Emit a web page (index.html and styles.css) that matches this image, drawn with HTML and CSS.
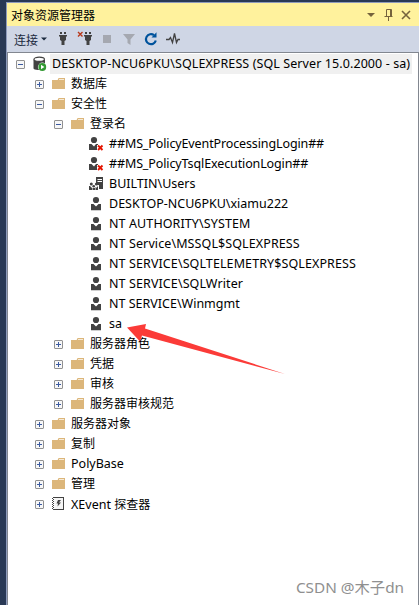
FILE: index.html
```html
<!DOCTYPE html>
<html lang="zh-CN">
<head>
  <meta charset="UTF-8">
  <meta name="viewport" content="width=device-width, initial-scale=1.0">
  <title>对象资源管理器</title>
  <link rel="stylesheet" href="styles.css">
</head>
<body>

<!-- Shared icons -->
<svg class="sprite" width="0" height="0">
  <symbol id="plus" viewBox="0 0 9 9">
    <rect x=".5" y=".5" width="8" height="8" rx=".5" fill="#f7f7f7" stroke="#919191"/>
    <path d="M2 4.5h5M4.5 2v5" stroke="#3b5aa0"/>
  </symbol>
  <symbol id="minus" viewBox="0 0 9 9">
    <rect x=".5" y=".5" width="8" height="8" rx=".5" fill="#f7f7f7" stroke="#919191"/>
    <path d="M2 4.5h5" stroke="#3b5aa0"/>
  </symbol>
  <symbol id="folder" viewBox="0 0 16 16">
    <path d="M1 4h5.6l1-2H14v11H1z" fill="#dcb67a"/>
    <path d="M8 3.5h5" stroke="#f6ead6"/>
  </symbol>
  <symbol id="user" viewBox="0 0 16 16">
    <circle cx="7" cy="4" r="3.1" fill="#424242"/>
    <path d="M2 8h2.5L7 10.5 9.5 8H12v6.3H2z" fill="#424242"/>
  </symbol>
  <symbol id="user-off" viewBox="0 0 16 16">
    <circle cx="5" cy="4" r="3.1" fill="#424242"/>
    <path d="M0 8h2.5L5 10.5 7 8h2v1H8v5H0z" fill="#424242"/>
    <path d="M9 9.5l4.5 4.5M13.5 9.5L9 14" stroke="#e51400" stroke-width="1.9"/>
  </symbol>
  <symbol id="group" viewBox="0 0 16 16">
    <path d="M7 1h7v12h-4V9H7z" fill="#424242"/>
    <path d="M8.5 3.5H13M8.5 5.5H13" stroke="#fff"/>
    <g fill="#424242">
      <circle cx="2.3" cy="8" r="1.5"/><circle cx="7.5" cy="8" r="1.6"/>
      <circle cx="4.7" cy="10.3" r="1.3"/>
      <path d="M0 10h1l1 1 1 1v2H0zM6.5 11l1 .8L9 10v4H6.5zM3.5 12H6v2H3.5z"/>
    </g>
  </symbol>
  <symbol id="server" viewBox="0 0 16 16">
    <path d="M1.5 3.5v8.8c0 1 2 1.700 4.500 1.700H9l4-5V3.500z" fill="#424242"/>
    <ellipse cx="7.2" cy="3.3" rx="5.2" ry="2.1" fill="#fff" stroke="#424242" stroke-width="1.2"/>
    <circle cx="10.3" cy="11" r="4.4" fill="#fff"/>
    <circle cx="10.3" cy="11" r="3.9" fill="#393"/>
    <path d="M9 8.8v4.4l3.4-2.2z" fill="#fff"/>
  </symbol>
  <symbol id="xevent" viewBox="0 0 16 16">
    <rect x="2.5" y="1.5" width="10" height="12" fill="#f5f5f5" stroke="#424242"/>
    <path d="M2.5 2v12" stroke="#fff" stroke-width="2" stroke-dasharray="1 1"/>
    <path d="M1.5 2v12" stroke="#424242" stroke-dasharray="1 1"/>
    <path d="M7 4h3L8 6.5h2l-3.5 4 .5-3H5.500z" fill="#424242"/>
  </symbol>
</svg>

<div class="panel">
  <div class="title-bar">
    <span class="title">对象资源管理器</span>
    <svg class="title-buttons" width="48" height="16" viewBox="0 0 48 16">
      <path d="M0 6h8l-4 4z" fill="#75633d"/>
      <path d="M19.5 9V2.5h5V9M17.5 9.5h8M21.5 10v4" fill="none" stroke="#75633d"/>
      <path d="M23.5 2v7" stroke="#75633d"/>
      <path d="M35 4l8 8M43 4l-8 8" stroke="#75633d" stroke-width="1.6"/>
    </svg>
  </div>

  <div class="toolbar">
    <span class="connect">连接</span>
    <svg width="6" height="16" viewBox="0 0 6 16"><path d="M0 6.5h6l-3 3z" fill="#1b293e"/></svg>
    <svg class="tools" width="126" height="16" viewBox="0 0 126 16">
      <!-- plug -->
      <g id="plug" fill="#424242">
        <path d="M2 1h2v2H2zM6 1h2v2H6zM1 4h8v1.5H8V9L6.500 10v4h-3v-4L2 9V5.500H1z"/>
      </g>
      <use href="#plug" x="25"/>
      <path d="M20 1l4.500 4.500M24.500 1L20 5.500" stroke="#b8391c" stroke-width="1.4"/>
      <rect x="45" y="4" width="8" height="8" fill="#a5a8b0"/>
      <path d="M65 3h12l-4.500 5.500V14l-3-2V8.500z" fill="#a5a8b0"/>
      <path d="M96 4.200A5 5 0 1 0 97.800 9.500" fill="none" stroke="#00539c" stroke-width="2.2"/>
      <path d="M93.500 6.500h5V1.300z" fill="#00539c"/>
      <path d="M108 8.500h3l1.500-2 2 5 2-9 2 9 1.500-3h2" fill="none" stroke="#424242" stroke-width="1.3"/>
    </svg>
  </div>

  <div class="tree">
    <div class="row">
      <svg class="toggle"><use href="#minus"/></svg>
      <svg class="icon"><use href="#server"/></svg>
      <span class="label selected">DESKTOP-NCU6PKU\SQLEXPRESS (SQL Server 15.0.2000 - sa)</span>
    </div>
    <div class="row level-1">
      <svg class="toggle"><use href="#plus"/></svg>
      <svg class="icon"><use href="#folder"/></svg>
      <span class="label cjk">数据库</span>
    </div>
    <div class="row level-1">
      <svg class="toggle"><use href="#minus"/></svg>
      <svg class="icon"><use href="#folder"/></svg>
      <span class="label cjk">安全性</span>
    </div>
    <div class="row level-2">
      <svg class="toggle"><use href="#minus"/></svg>
      <svg class="icon"><use href="#folder"/></svg>
      <span class="label cjk">登录名</span>
    </div>

    <!-- Logins -->
    <div class="row level-3">
      <svg class="icon"><use href="#user-off"/></svg>
      <span class="label policy">##MS_PolicyEventProcessingLogin##</span>
    </div>
    <div class="row level-3">
      <svg class="icon"><use href="#user-off"/></svg>
      <span class="label policy">##MS_PolicyTsqlExecutionLogin##</span>
    </div>
    <div class="row level-3">
      <svg class="icon"><use href="#group"/></svg>
      <span class="label">BUILTIN\Users</span>
    </div>
    <div class="row level-3">
      <svg class="icon"><use href="#user"/></svg>
      <span class="label">DESKTOP-NCU6PKU\xiamu222</span>
    </div>
    <div class="row level-3">
      <svg class="icon"><use href="#user"/></svg>
      <span class="label service">NT AUTHORITY\SYSTEM</span>
    </div>
    <div class="row level-3">
      <svg class="icon"><use href="#user"/></svg>
      <span class="label service">NT Service\MSSQL$SQLEXPRESS</span>
    </div>
    <div class="row level-3">
      <svg class="icon"><use href="#user"/></svg>
      <span class="label service">NT SERVICE\SQLTELEMETRY$SQLEXPRESS</span>
    </div>
    <div class="row level-3">
      <svg class="icon"><use href="#user"/></svg>
      <span class="label service">NT SERVICE\SQLWriter</span>
    </div>
    <div class="row level-3">
      <svg class="icon"><use href="#user"/></svg>
      <span class="label">NT SERVICE\Winmgmt</span>
    </div>
    <div class="row level-3">
      <svg class="icon"><use href="#user"/></svg>
      <span class="label">sa</span>
    </div>

    <div class="row level-2">
      <svg class="toggle"><use href="#plus"/></svg>
      <svg class="icon"><use href="#folder"/></svg>
      <span class="label cjk">服务器角色</span>
    </div>
    <div class="row level-2">
      <svg class="toggle"><use href="#plus"/></svg>
      <svg class="icon"><use href="#folder"/></svg>
      <span class="label cjk">凭据</span>
    </div>
    <div class="row level-2">
      <svg class="toggle"><use href="#plus"/></svg>
      <svg class="icon"><use href="#folder"/></svg>
      <span class="label cjk">审核</span>
    </div>
    <div class="row level-2">
      <svg class="toggle"><use href="#plus"/></svg>
      <svg class="icon"><use href="#folder"/></svg>
      <span class="label cjk">服务器审核规范</span>
    </div>
    <div class="row level-1">
      <svg class="toggle"><use href="#plus"/></svg>
      <svg class="icon"><use href="#folder"/></svg>
      <span class="label cjk">服务器对象</span>
    </div>
    <div class="row level-1">
      <svg class="toggle"><use href="#plus"/></svg>
      <svg class="icon"><use href="#folder"/></svg>
      <span class="label cjk">复制</span>
    </div>
    <div class="row level-1">
      <svg class="toggle"><use href="#plus"/></svg>
      <svg class="icon"><use href="#folder"/></svg>
      <span class="label">PolyBase</span>
    </div>
    <div class="row level-1">
      <svg class="toggle"><use href="#plus"/></svg>
      <svg class="icon"><use href="#folder"/></svg>
      <span class="label cjk">管理</span>
    </div>
    <div class="row level-1">
      <svg class="toggle"><use href="#plus"/></svg>
      <svg class="icon"><use href="#xevent"/></svg>
      <span class="label">XEvent <span class="cjk">探查器</span></span>
    </div>
  </div>
</div>

<!-- Arrow pointing at the sa login -->
<svg class="arrow" width="158" height="52" viewBox="0 0 158 52">
  <path d="M0 4.500L19 1l-1 4.500L158 51 15 12.500l-2 6z" fill="#fb3b38"/>
</svg>

<div class="watermark">CSDN @木子dn</div>

</body>
</html>
```
FILE: styles.css
```css
body {
  margin: 0;
  height: 605px;
  overflow: hidden;
  box-sizing: border-box;
  padding: 2px 0 0 6px;
  background: #293955;
  font-family: "Noto Sans", "Noto Sans CJK SC", sans-serif;
  font-size: 12.5px;
  color: #000;
}

.sprite {
  display: none;
}

.panel {
  display: flex;
  flex-direction: column;
  box-sizing: border-box;
  height: 603px;
  border-top: 1px solid #8e9bbc;
  border-left: 1px solid #8e9bbc;
}

/* Title bar */
.title-bar {
  display: flex;
  align-items: center;
  justify-content: space-between;
  flex: none;
  height: 23px;
  padding: 0 4px;
  background: #fff29d;
}

.title {
  font-family: "Noto Sans CJK SC", sans-serif;
  font-size: 12px;
  line-height: 22px;
}

/* Toolbar */
.toolbar {
  display: flex;
  align-items: center;
  flex: none;
  height: 26px;
  padding-left: 7px;
  background: #cfd6e5;
}

.connect {
  width: 27px;
  font-family: "Noto Sans CJK SC", sans-serif;
  font-size: 12px;
  color: #1b293e;
}

.tools {
  margin-left: 11px;
}

/* Tree */
.tree {
  flex: 1;
  padding: 1px 0 0 8px;
  background: #fff;
  border: solid #828790;
  border-width: 1px 1px 0 1px;
}

.row {
  display: flex;
  align-items: center;
  height: 20px;
  white-space: nowrap;
}

.level-1 {
  padding-left: 19px;
}

.level-2 {
  padding-left: 38px;
}

.level-3 {
  padding-left: 73px;
}

.toggle {
  flex: none;
  width: 9px;
  height: 9px;
  margin-right: 7px;
}

.icon {
  flex: none;
  width: 16px;
  height: 16px;
  margin-right: 2px;
}

.label {
  line-height: 20px;
  height: 20px;
  padding: 0 2px;
}

.cjk {
  font-family: "Noto Sans CJK SC", sans-serif;
  font-size: 12px;
}

.label.cjk {
  line-height: 18px;
}

.selected {
  background: #f0f0f0;
  letter-spacing: 0.09px;
}

.policy {
  letter-spacing: -0.12px;
}

.service {
  letter-spacing: 0.1px;
}

/* Overlays */
.arrow {
  position: absolute;
  left: 127px;
  top: 323px;
}

.watermark {
  position: absolute;
  right: 15px;
  bottom: 6px;
  font-size: 15.3px;
  line-height: 24px;
  color: #8f8f8f;
}
```
